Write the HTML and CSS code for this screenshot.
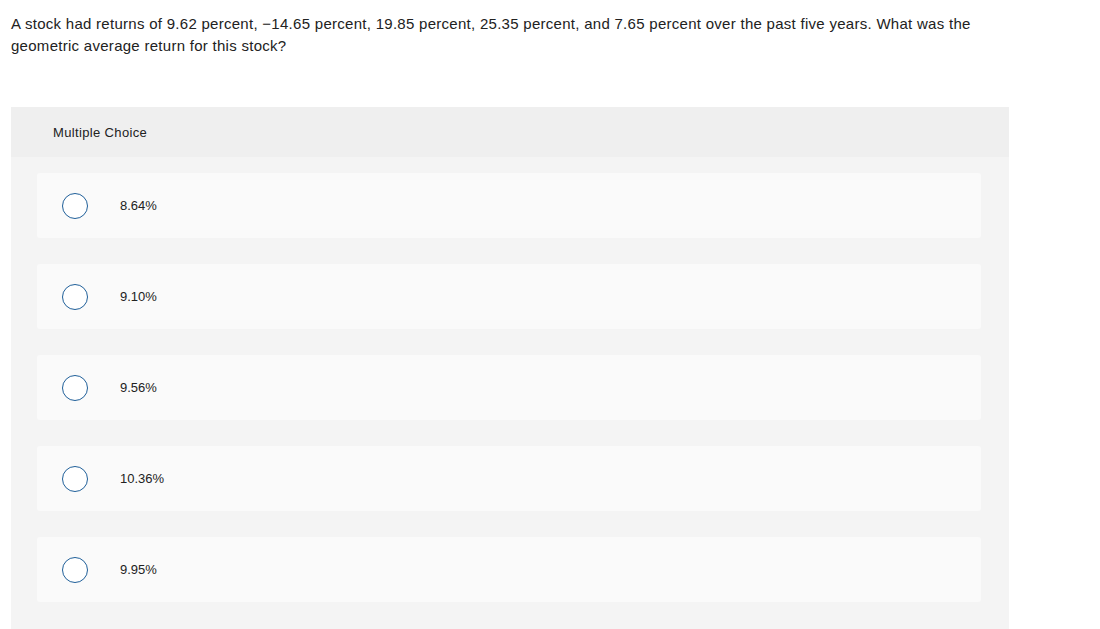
FILE: index.html
```html
<!DOCTYPE html>
<html>
<head>
<meta charset="utf-8">
<link rel="stylesheet" href="styles.css">
</head>
<body>
<div class="page">
  <p class="question">A stock had returns of 9.62 percent, &minus;14.65 percent, 19.85 percent, 25.35 percent, and 7.65 percent over the past five years. What was the geometric average return for this stock?</p>
  <div class="panel">
    <div class="panel-header">Multiple Choice</div>
    <div class="panel-body">
      <div class="option"><span class="radio"></span><span class="label">8.64%</span></div>
      <div class="option"><span class="radio"></span><span class="label">9.10%</span></div>
      <div class="option"><span class="radio"></span><span class="label">9.56%</span></div>
      <div class="option"><span class="radio"></span><span class="label">10.36%</span></div>
      <div class="option"><span class="radio"></span><span class="label">9.95%</span></div>
    </div>
  </div>
</div>
</body>
</html>
```
FILE: styles.css
```css
html, body {
  margin: 0;
  padding: 0;
  background: #fff;
}
body {
  font-family: "Liberation Sans", Arial, sans-serif;
  color: #222;
}
.page {
  padding: 13px 0 0 11px;
  width: 998px;
}
.question {
  margin: 0;
  font-size: 15px;
  line-height: 22px;
  letter-spacing: 0.28px;
  width: 985px;
}
.panel {
  margin-top: 50px;
  width: 998px;
  background: #f4f4f4;
}
.panel-header {
  height: 50px;
  background: #efefef;
  display: flex;
  align-items: center;
  padding-left: 42px;
  font-size: 13px;
  letter-spacing: 0.35px;
  color: #222;
}
.panel-body {
  padding: 16px 28px 30px 26px;
  display: flex;
  flex-direction: column;
  gap: 26px;
}
.option {
  height: 65px;
  background: #fafafa;
  border-radius: 3px;
  display: flex;
  align-items: center;
  padding-left: 25px;
}
.radio {
  width: 24px;
  height: 24px;
  border: 1.5px solid #1f5f99;
  border-radius: 50%;
  background: #fff;
  flex: none;
}
.label {
  margin-left: 32px;
  font-size: 13px;
  color: #222;
}
```
